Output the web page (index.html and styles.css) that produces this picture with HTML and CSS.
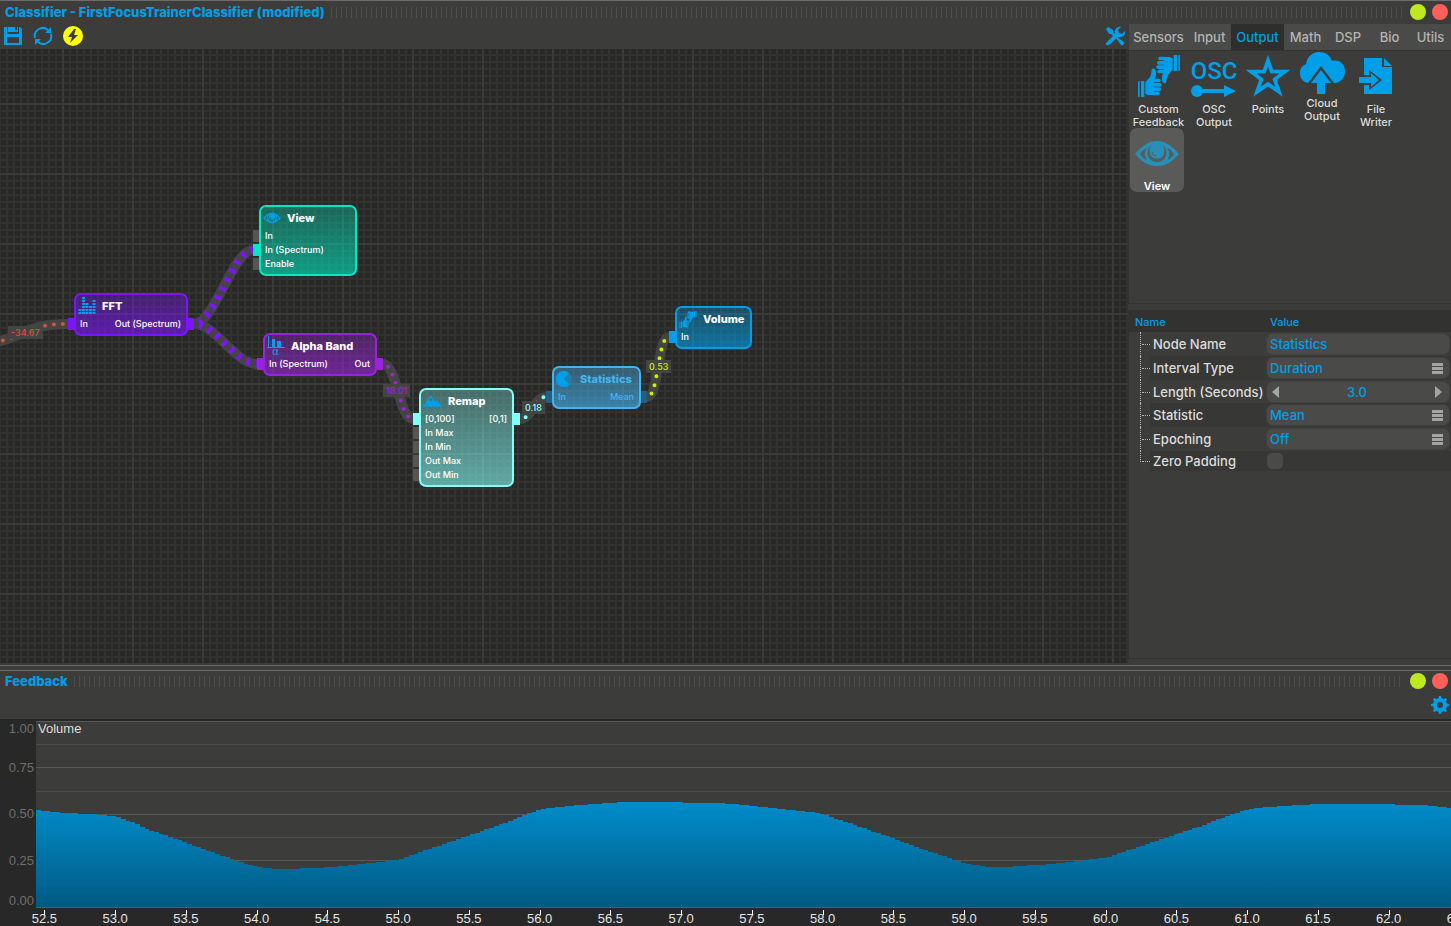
FILE: index.html
```html
<!DOCTYPE html>
<html lang="en">
<head>
<meta charset="utf-8">
<title>Classifier - FirstFocusTrainerClassifier</title>
<link rel="stylesheet" href="styles.css">
</head>
<body>
<svg class="defs" aria-hidden="true">
  <symbol id="i-hands" viewBox="24 18 132 132">
    <g id="hand">
      <path d="M27 100l5-1v48l-5-1zM36 99h10v48H36z"/>
      <path d="M49 102l8-8c8-8 10-16 11-29 2-5 8-4 11 1 4 8 2 18-1 27h-2v48H62c-5 0-9-2-13-4z"/>
      <rect x="72" y="92" width="23" height="11" rx="5"/>
      <rect x="72" y="105" width="26" height="11" rx="5"/>
      <rect x="72" y="118" width="24" height="11" rx="5"/>
      <rect x="70" y="131" width="22" height="11" rx="5"/>
    </g>
    <use href="#hand" transform="rotate(180 90 84)"/>
  </symbol>
  <symbol id="i-eye" viewBox="0 0 44 26">
    <path fill-rule="evenodd" d="M0 13C8 4 14 0 22 0s14 4 22 13c-8 9-14 12-22 12S8 22 0 13zM5 13c2 3 4 5 7 6-3-4-3-8 0-12-3 1-5 3-7 6zM39 13c-2-3-4-5-7-6 3 4 3 8 0 12 3-1 5-3 7-6zM16 4c-5 5-4 12 0 15 4 3 8 3 12 0 4-3 5-10 0-15 2 5 2 9-1 12-3 2-7 2-10 0-3-3-3-7-1-12z"/>
    <path class="pupil" d="M18 11a2 2 0 0 0 3 3" />
  </symbol>
</svg>

<main class="app">
  <section class="panel classifier">
    <header class="titlebar">
      <h1>Classifier - FirstFocusTrainerClassifier (modified)</h1>
      <span class="grip"></span>
      <button class="dot green" aria-label="Maximize"></button>
      <button class="dot red" aria-label="Close"></button>
    </header>
    <div class="workspace">
      <div class="editor">
        <div class="toolbar">
          <button class="tool" aria-label="Save"><svg width="19" height="18" viewBox="0 0 19 18"><path fill-rule="evenodd" d="M0 0h3v7h12V0h1l2 2v16H0zM3 10v6h12v-6z"/><path d="M4 0h7v3h2V0h1v5H4z"/></svg></button>
          <button class="tool" aria-label="Reload"><svg width="20" height="20" viewBox="0 0 20 20"><path fill="none" stroke="currentColor" stroke-width="2" d="M2 12a8 8 0 0 1 13-8M18 8a8 8 0 0 1-13 8"/><path d="M18 1v6h-6zM2 19v-6h6z"/></svg></button>
          <button class="tool" aria-label="Run"><svg width="20" height="20" viewBox="0 0 20 20"><circle class="sun" cx="10" cy="10" r="10"/><path class="bolt" d="M11 3L5 11h4l-2 6 8-8h-4l2-6z"/></svg></button>
          <button class="tool last" aria-label="Tools"><svg width="20" height="20" viewBox="0 0 20 20"><path d="M1 3l2-2 5 3v2l3 3-2 2-3-3H4zM12 11l7 5c1 2-1 4-3 3l-5-7z"/><path d="M1 17l9-9c-1-4 2-8 6-7l-3 3 1 3 3 1 3-3c1 4-3 7-7 6l-9 8c-2 1-4-1-3-2z"/></svg></button>
        </div>
        <div class="canvas">
          <svg class="wires">
            <g class="cable">
              <path d="M-30 295C25 295 15 275 68 275"/>
              <path d="M194 275C214 275 233 201 253 201"/>
              <path d="M194 275C216 275 235 315 257 315"/>
              <path d="M383 315C397 315 399 370 413 370"/>
              <path d="M520 370C532 370 534 348 546 348"/>
              <path d="M647 348C659 348 657 288 669 288"/>
            </g>
            <g class="band">
              <path d="M194 275C214 275 233 201 253 201"/>
              <path d="M194 275C216 275 235 315 257 315"/>
            </g>
            <g class="dots">
              <path class="c-red" d="M-30 295C25 295 15 275 68 275"/>
              <path class="c-purple" d="M383 315C397 315 399 370 413 370"/>
              <path class="c-cyan" d="M520 370C532 370 534 348 546 348"/>
              <path class="c-lime" d="M647 348C659 348 657 288 669 288"/>
            </g>
          </svg>

          <article class="node view">
            <h2><svg width="18" height="12"><use href="#i-eye"/></svg>View</h2>
            <p class="in off">In</p><p class="in">In (Spectrum)</p><p class="in off">Enable</p>
          </article>
          <article class="node fft">
            <h2><svg width="18" height="18" viewBox="0 0 18 18"><path fill="none" stroke="currentColor" stroke-width="3" stroke-dasharray="2 1" d="M2 17v-5M5.500 17V0M9 17V6M12.500 17V9M16 17V3"/></svg>FFT</h2>
            <p class="in out"><span>In</span><span>Out (Spectrum)</span></p>
          </article>
          <article class="node alpha">
            <h2><svg width="18" height="20" viewBox="0 0 18 20"><path d="M1 0h1v11h16v1H0v-1h1zM5 3h3v8H5zM10 5h4v6h-4z"/><text x="5" y="19" class="glyph">α</text></svg>Alpha Band</h2>
            <p class="in out"><span>In (Spectrum)</span><span>Out</span></p>
          </article>
          <article class="node remap">
            <h2><svg width="19" height="12" viewBox="0 0 20 12"><path fill-rule="evenodd" d="M0 12L8 0l5 7 2-2 5 7zM8 2L6 5l2 1 2-1zM15 7l-1 2h2z"/></svg>Remap</h2>
            <p class="in out"><span>[0,100]</span><span>[0,1]</span></p>
            <p class="in off">In Max</p><p class="in off">In Min</p><p class="in off">Out Max</p><p class="in off">Out Min</p>
          </article>
          <article class="node stats">
            <h2><svg width="18" height="16" viewBox="0 0 18 16"><circle cx="8" cy="8" r="8" opacity=".4"/><path d="M8 8l5-6a8 8 0 1 0 0 12z"/></svg>Statistics</h2>
            <p class="in out"><span>In</span><span>Mean</span></p>
          </article>
          <article class="node volume">
            <h2><svg width="18" height="19"><use href="#i-hands"/></svg>Volume</h2>
            <p class="in">In</p>
          </article>

          <output class="reading r1 c-red">-34.67</output>
          <output class="reading r2 c-purple">18.01</output>
          <output class="reading r3 c-cyan">0.18</output>
          <output class="reading r4 c-lime">0.53</output>
        </div>
      </div>

      <aside class="side">
        <nav class="tabs">
          <button>Sensors</button><button>Input</button><button class="active">Output</button><button>Math</button><button>DSP</button><button>Bio</button><button>Utils</button>
        </nav>
        <div class="palette">
          <button class="item wide"><svg width="44" height="44"><use href="#i-hands"/></svg>Custom<br>Feedback</button>
          <button class="item"><svg width="50" height="44" viewBox="0 0 50 44"><text class="osc" x="25" y="25" text-anchor="middle">OSC</text><circle cx="8" cy="37" r="6"/><path d="M8 35h27v-4l12 6-12 6v-4H8z"/></svg>OSC<br>Output</button>
          <button class="item"><svg width="48" height="46" viewBox="-24 -24 48 46"><path fill="none" stroke="currentColor" stroke-width="4" stroke-miterlimit="8" d="M0-17L4-5.500h13.500L7 2.500l4.500 13L0 7.500l-11.500 8L-7 2.500l-10.500-8H-4z"/></svg>Points</button>
          <button class="item up"><svg width="48" height="44" viewBox="0 0 48 44"><path d="M10 32a10 10 0 0 1-2-19C9 6 14 1 21 1c6 0 11 3 13 9 7-2 13 3 13 10 0 6-4 12-11 12z"/><path class="cut" d="M23 15l13 17h-7v14h-12V32h-7z"/><path d="M23 19L33 32h-6v11h-8V32h-6z"/></svg>Cloud<br>Output</button>
          <button class="item"><svg width="34" height="42" viewBox="0 0 34 42"><path d="M5 3h18v9h10v27H5zM25 3l8 8h-8z"/><path class="cut" d="M0 20h10v-5l13 10-13 10v-5H0z"/><path d="M0 22h12v-4l8 7-8 7v-4H0z"/></svg>File<br>Writer</button>
          <button class="item selected"><svg width="44" height="26"><use href="#i-eye"/></svg>View</button>
        </div>

        <div class="props">
          <table>
            <colgroup><col class="col-tree"><col class="col-name"><col></colgroup>
            <thead><tr><th colspan="2">Name</th><th>Value</th></tr></thead>
            <tbody>
              <tr><td class="tree"></td><th><label for="p1">Node Name</label></th><td><div class="field"><input id="p1" type="text" value="Statistics"></div></td></tr>
              <tr><td class="tree"></td><th><label for="p2">Interval Type</label></th><td><div class="field menu"><select id="p2"><option>Duration</option></select></div></td></tr>
              <tr class="mid"><td class="tree"></td><th><label for="p3">Length (Seconds)</label></th><td><div class="field spin"><button class="prev" aria-label="Decrease"></button><input id="p3" type="text" value="3.0"><button class="next" aria-label="Increase"></button></div></td></tr>
              <tr><td class="tree"></td><th><label for="p4">Statistic</label></th><td><div class="field menu"><select id="p4"><option>Mean</option></select></div></td></tr>
              <tr><td class="tree"></td><th><label for="p5">Epoching</label></th><td><div class="field menu"><select id="p5"><option>Off</option></select></div></td></tr>
              <tr class="short"><td class="tree"></td><th><label for="p6">Zero Padding</label></th><td><input id="p6" type="checkbox"></td></tr>
            </tbody>
          </table>
        </div>
      </aside>
    </div>
  </section>

  <section class="panel feedback">
    <header class="titlebar">
      <h1>Feedback</h1>
      <span class="grip"></span>
      <button class="dot green" aria-label="Maximize"></button>
      <button class="dot red" aria-label="Close"></button>
    </header>
    <div class="toolbar">
      <button class="tool last" aria-label="Settings"><svg width="20" height="20" viewBox="-10 -10 20 20"><g id="teeth"><path d="M-1-9h2l1 4h-4zM-1 9h2l1-4h-4zM-9-1v2l4 1v-4zM9-1v2l-4 1v-4z"/></g><use href="#teeth" transform="rotate(45)"/><circle r="5" fill="none" stroke="currentColor" stroke-width="4"/></svg></button>
    </div>
    <div class="chart">
      <div class="yaxis"><span>1.00</span><span>0.75</span><span>0.50</span><span>0.25</span><span>0.00</span></div>
      <div class="plot">
        <svg viewBox="0 0 1415 187" preserveAspectRatio="none">
          <defs><linearGradient id="fill" gradientUnits="userSpaceOnUse" x1="0" y1="80" x2="0" y2="187"><stop offset="0" stop-color="#008dcb"/><stop offset="1" stop-color="#005a82"/></linearGradient></defs>
          <path class="minor" d="M0 23.500h1415M0 70.500h1415M0 116.500h1415"/>
          <path class="major" d="M0 .5h1415M0 46.500h1415M0 93.500h1415M0 139.500h1415"/>
          <path id="area" fill="url(#fill)"/>
          <path class="major" d="M0 186.500h1415"/>
        </svg>
        <span class="series">Volume</span>
      </div>
      <div class="xaxis" id="xaxis"></div>
    </div>
  </section>
</main>
<script src="chart.js"></script>
</body>
</html>
```
FILE: styles.css
```css
* { box-sizing: border-box; }
body, h1, h2, p { margin: 0; }
body {
  background: #3c3c3a;
  color: #dcdcdc;
  font-family: Inter, "Liberation Sans", sans-serif;
  font-size: 13px;
  overflow: hidden;
}
button, input, select {
  font: inherit; color: inherit; background: none; border: 0; padding: 0; margin: 0; outline: 0;
  appearance: none; min-width: 0;
}
svg { display: block; fill: currentColor; flex: none; }
.defs { position: absolute; width: 0; height: 0; }

.app { display: flex; flex-direction: column; height: 100vh; }
.panel { display: flex; flex-direction: column; border-top: 1px solid #6c6c6a; min-width: 0; }
.classifier { flex: 1; min-height: 0; border-bottom: 1px solid #6c6c6a; }
.feedback { margin-top: 4px; }

.titlebar { display: flex; align-items: center; height: 22px; padding: 0 3px 0 5px; gap: 6px; }
.feedback .titlebar { height: 20px; }
.titlebar h1 { font-size: 13px; font-weight: 800; line-height: 20px; color: #009fe8; white-space: nowrap; }
.grip { flex: 1; height: 11px; background: repeating-linear-gradient(90deg, #4e4e4c 0 1px, transparent 1px 5px); }
.dot { width: 16px; height: 16px; border-radius: 50%; }
.green { background: #bfe91f; }
.red { background: #ff5f5a; }

.toolbar { display: flex; align-items: center; gap: 10px; height: 26px; padding: 0 3px 0 4px; color: #009fe8; }
.feedback .toolbar { height: 28px; padding-right: 1px; }
.last { margin-left: auto; }
.sun { fill: #ffff00; }
.bolt { fill: #3c3c3a; }

.workspace { display: flex; flex: 1; min-height: 0; }
.editor { display: flex; flex-direction: column; flex: 1; min-width: 0; }
.canvas {
  position: relative; flex: 1; overflow: hidden;
  background-color: #282826;
  background-image:
    linear-gradient(90deg, #3a3a38 2px, transparent 2px),
    linear-gradient(#3a3a38 2px, transparent 2px),
    linear-gradient(90deg, #31312f 2px, transparent 2px),
    linear-gradient(#31312f 2px, transparent 2px);
  background-size: 70px 70px, 70px 70px, 7px 7px, 7px 7px;
  background-position: 62px 0, 0 54px, 6px 0, 0 5px;
}
.wires { position: absolute; width: 100%; height: 100%; fill: none; }
.cable { stroke: #444442; stroke-width: 10; }
.band { stroke: #7c14ff; stroke-width: 7; stroke-dasharray: 4 6; stroke-dashoffset: -5; }
.dots { stroke-width: 4; stroke-linecap: round; stroke-dasharray: 0 9; stroke-dashoffset: -6; }
.dots path { stroke: currentColor; }
.c-red { color: #d0543f; }
.c-purple { color: #9a22dc; }
.c-cyan { color: #84fff8; }
.c-lime { color: #c8f000; }

.node {
  position: absolute; border: 2px solid var(--c); border-radius: 7px; padding-bottom: 3px;
  color: #fff; font-size: 9px; font-weight: 500;
  background: linear-gradient(var(--a), var(--b));
}
.node h2 { display: flex; align-items: center; gap: 6px; height: 22px; padding-left: 2px; font-size: 11px; font-weight: 800; white-space: nowrap; }
.node h2 svg { color: #009fe8; }
.glyph { font: 11px "DejaVu Sans", sans-serif; }
.pupil { fill: none; stroke: #5a5a58; stroke-width: 1; }
.node p { position: relative; display: flex; justify-content: space-between; height: 14px; line-height: 14px; padding: 0 5px 0 4px; white-space: nowrap; }
.in::before, .out::after { content: ""; position: absolute; top: 1px; width: 6px; height: 12px; background: var(--c); }
.in::before { left: -8px; }
.out::after { right: -8px; }
.off::before { background: #555553; }
.view { left: 259px; top: 156px; width: 98px; --c: #00eac2; --a: #00eac250; --b: #00eac298; }
.fft { left: 74px; top: 244px; width: 114px; --c: #7c14ff; --a: #7c14ff50; --b: #7c14ffa0; }
.alpha { left: 263px; top: 284px; width: 114px; --c: #9a22dc; --a: #9a22dc50; --b: #9a22dca0; }
.remap { left: 419px; top: 339px; width: 95px; --c: #84fff8; --a: #84fff850; --b: #84fff898; }
.stats { left: 552px; top: 317px; width: 89px; --c: #44b4f0; --a: #44b4f060; --b: #44b4f0a0; }
.stats h2, .stats p { color: #44b4f0; }
.stats p::before, .stats p::after { background: #245f82; }
.volume { left: 675px; top: 257px; width: 77px; --c: #009fe8; --a: #009fe850; --b: #009fe8a0; }
.reading { position: absolute; padding: 0 3px; background: #444442; font-size: 9px; font-weight: 500; line-height: 13px; }
.r1 { left: 8px; top: 277px; }
.r2 { left: 383px; top: 335px; }
.r3 { left: 522px; top: 352px; }
.r4 { left: 646px; top: 311px; }

.side { width: 323px; display: flex; flex-direction: column; padding-top: 1px; }
.tabs { display: grid; grid-template-columns: 59fr 43fr 53fr 43fr 42fr 41fr 41fr; height: 26px; background: #4a4a48; color: #b4b4b2; margin-left: 1px; }
.tabs button { font-weight: 500; }
.tabs .active { background: #2e2e2c; color: #009fe8; }
.palette {
  display: flex; flex-wrap: wrap; align-content: flex-start; height: 254px; padding: 0 40px 0 1px;
  border: 1px solid #323230; border-right: 0;
}
.item {
  display: flex; flex-direction: column; align-items: center; justify-content: flex-start;
  width: 54px; height: 77px; padding-top: 3px; font-size: 11px; font-weight: 500; line-height: 13px; color: #dcdcdc;
}
.wide { width: 57px; }
.item svg { color: #009fe8; height: 44px; margin-bottom: 5px; }
.up svg { margin-top: -3px; margin-bottom: 2px; }
.item.selected { height: 64px; padding-top: 0; background: #5a5a58; border-radius: 7px; color: #fff; font-weight: 600; }
.item.selected svg { color: #2890b8; height: 26px; margin: 13px 0; }
.cut { fill: #3c3c3a; }
.osc { font: 500 24px Roboto, "Liberation Sans", sans-serif; }

.props { flex: 1; margin-top: 6px; margin-bottom: 6px; border: 1px solid #323230; border-right: 0; }
table { width: 100%; border-collapse: collapse; table-layout: fixed; }
.col-tree { width: 21px; }
.col-name { width: 117px; }
table th, table td { padding: 0; text-align: left; font-weight: 500; height: 24px; white-space: nowrap; }
thead th { height: 21px; background: #323230; color: #009fe8; font-size: 11px; padding-left: 6px; }
thead th:last-child { padding-left: 3px; }
tbody tr:nth-child(even) > :not(.tree) { background: #373735; }
tbody th { padding-left: 3px; }
tbody td:last-child { padding-right: 2px; }
.mid > * { height: 23px; }
.short > * { height: 20px; }
tbody .tree { position: relative; }
.tree::before { content: ""; position: absolute; left: 11px; top: 0; bottom: 0; border-left: 1px dotted #b4b4b2; }
.tree::after { content: ""; position: absolute; left: 13px; right: 0; top: 12px; border-top: 1px dotted #b4b4b2; }
.short .tree::before { bottom: 9px; }
.short .tree::after { top: 10px; }
.field { display: flex; align-items: center; height: 20px; padding: 0 3px; border-radius: 6px; background: #4a4a48; color: #009fe8; box-shadow: 0 0 0 1px #40403e; }
.field input, .field select { flex: 1; width: 100%; font-weight: 500; height: 20px; }
.menu { padding-right: 6px; }
.menu::after { content: ""; width: 11px; height: 11px; background: repeating-linear-gradient(#a4a4a2 0 3px, transparent 3px 4px); }
.spin { padding: 0 7px 0 5px; }
.spin input { text-align: center; }
.prev, .next { border: 6px solid transparent; border-width: 6px 0; }
.prev { border-right: 7px solid #a4a4a2; }
.next { border-left: 7px solid #a4a4a2; }
input[type="checkbox"] { display: block; width: 16px; height: 16px; border-radius: 5px; background: #4a4a48; }

.chart {
  display: grid; grid-template: 187px 18px / 36px minmax(0, 1fr);
  padding-top: 2px; background: #282828; font-family: "Liberation Sans", Arial, sans-serif;
}
.yaxis { display: grid; grid-template-rows: 23px 46px 47px 46px 25px; align-items: center; justify-content: end; padding-right: 2px; line-height: 15px; color: #6e6e6c; }
.yaxis span:first-child { align-self: start; }
.yaxis span:last-child { align-self: end; }
.plot { position: relative; background: #3c3c3a; }
.plot svg { width: 100%; height: 187px; }
.minor, .major { stroke: #4c4c4a; fill: none; }
.major { stroke: #585856; }
.series { position: absolute; left: 2px; top: 0; line-height: 15px; }
.xaxis { grid-column: 1 / 3; display: flex; overflow: hidden; padding-left: 9px; line-height: 21px; }
.xaxis span { position: relative; flex: 0 0 calc((100vw - 36px) / 20); text-align: center; color: #e4e4e4; }
.xaxis span::before { content: ""; position: absolute; left: 50%; top: 2px; height: 5px; border-left: 1px solid #fff; }
```
FILE: chart.js
```js
// Sampled volume curve: x, y pairs in plot units (y grows downwards).
const samples = [
  [0, 89], [9, 90], [19, 91], [28, 92], [52, 93], [66, 94], [80, 96], [90, 100], [99, 103], [108, 108],
  [127, 114], [151, 123], [179, 133], [208, 143], [226, 147], [245, 148], [278, 147], [306, 145],
  [325, 143], [344, 141], [362, 138], [464, 103], [485, 94], [504, 88], [518, 86], [556, 83], [584, 81],
  [612, 81], [679, 82], [697, 83], [717, 85], [736, 87], [754, 89], [774, 91], [787, 94], [802, 99],
  [834, 110], [857, 118], [881, 127], [926, 142], [948, 146], [967, 146], [1014, 143], [1041, 140], [1071, 136],
  [1085, 131], [1127, 117], [1160, 106], [1197, 92], [1216, 87], [1244, 85], [1282, 83], [1324, 83],
  [1387, 84], [1401, 86], [1415, 87]
];
const width = 1415, base = 186, step = 4.72;
const valueAt = x => {
  const i = Math.max(1, samples.findIndex(p => p[0] >= x));
  const [x0, y0] = samples[i - 1], [x1, y1] = samples[i];
  return Math.round(y0 + (y1 - y0) * (x - x0) / (x1 - x0));
};
let d = `M0 ${base}`;
for (let x = 0; x < width; x += step) {
  const end = Math.min(width, Math.round(x + step));
  d += `V${valueAt(x)}H${end}`;
}
document.getElementById("area").setAttribute("d", d + `V${base}Z`);

const axis = document.getElementById("xaxis");
for (let t = 52.5; t <= 62.5; t += 0.5) {
  const label = document.createElement("span");
  label.textContent = t.toFixed(1);
  axis.append(label);
}
```
